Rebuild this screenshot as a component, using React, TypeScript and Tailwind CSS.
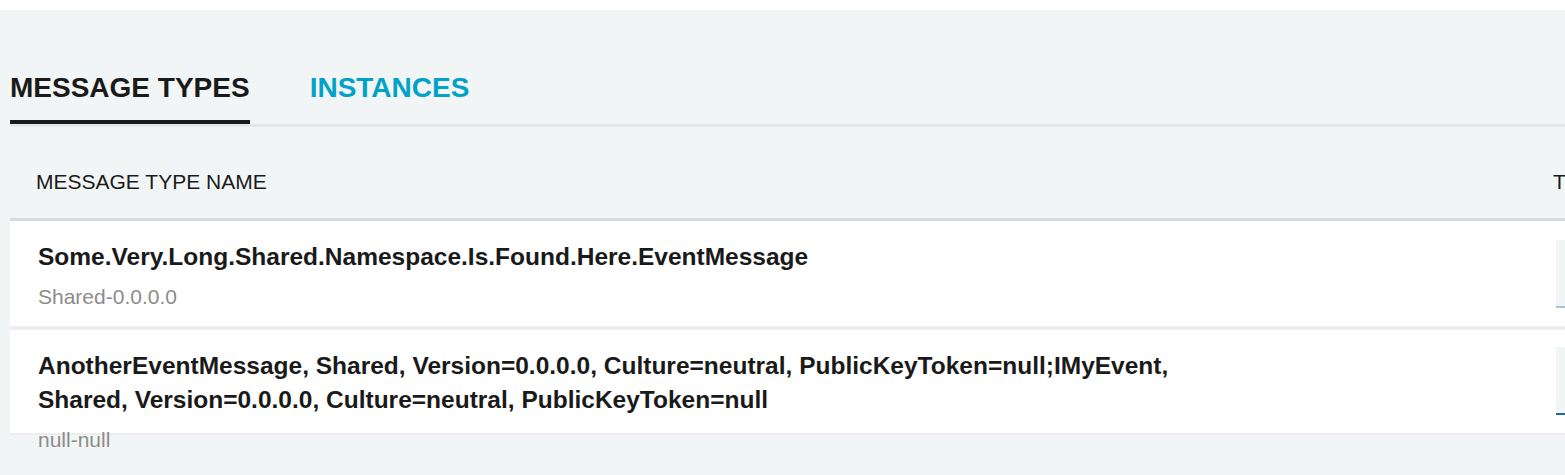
import React from 'react';

interface MessageType {
    id: string;
    name: string;
    assembly: string;
    rowClass: string;
    barClass: string;
}

const messageTypes: MessageType[] = [
    {
        id: '1',
        name: 'Some.Very.Long.Shared.Namespace.Is.Found.Here.EventMessage',
        assembly: 'Shared-0.0.0.0',
        rowClass: 'h-[109px] border-b-4',
        barClass: 'mt-[19px] h-[68px] border-[#a5c3dc]',
    },
    {
        id: '2',
        name: 'AnotherEventMessage, Shared, Version=0.0.0.0, Culture=neutral, PublicKeyToken=null;IMyEvent, Shared, Version=0.0.0.0, Culture=neutral, PublicKeyToken=null',
        assembly: 'null-null',
        rowClass: 'h-[105px] border-b-2',
        barClass: 'mt-[17px] h-[68px] border-[#1f68a3]',
    },
];

export default function App() {
    return (
        <div className="h-[475px] w-full overflow-hidden bg-white pt-[10px] font-['Liberation_Sans',Arial,sans-serif] text-[#1a1a1a]">
            <div className="h-full bg-[#f2f5f6] pl-[10px]">
                {/* Tabs */}
                <div className="flex gap-[60px] border-b-[3px] border-[#e3e7e8] pt-[62px]">
                    <div className="border-b-4 border-[#1a1a1a] pb-[16px] text-[28px] font-bold leading-[32px]">
                        MESSAGE TYPES
                    </div>
                    <div className="pb-[20px] text-[28px] font-bold leading-[32px] text-[#00a3c7]">
                        INSTANCES
                    </div>
                </div>

                <div className="w-[1900px]">
                    {/* Table header */}
                    <div className="flex h-[94px] border-b-[3px] border-[#d5dada] pt-[43px] text-[21px] leading-[24px]">
                        <div className="w-[1517px] pl-[26px]">MESSAGE TYPE NAME</div>
                        <div className="pl-[26px]">TYPE</div>
                    </div>

                    {/* Rows */}
                    {messageTypes.map((m) => (
                        <div key={m.id} className={`flex bg-white border-[#ededed] ${m.rowClass}`}>
                            <div className="w-[1517px] pl-[28px] pt-[19px]">
                                <div className="max-w-[1180px] text-[24.5px] font-bold leading-[34px]">{m.name}</div>
                                <div className="mt-[11px] text-[21px] leading-[24px] text-[#8c8c8c]">{m.assembly}</div>
                            </div>
                            <div className="pl-[29px]">
                                <div className={`w-[200px] border-b-2 bg-[#f2f5f6] ${m.barClass}`} />
                            </div>
                        </div>
                    ))}
                </div>
            </div>
        </div>
    );
}
